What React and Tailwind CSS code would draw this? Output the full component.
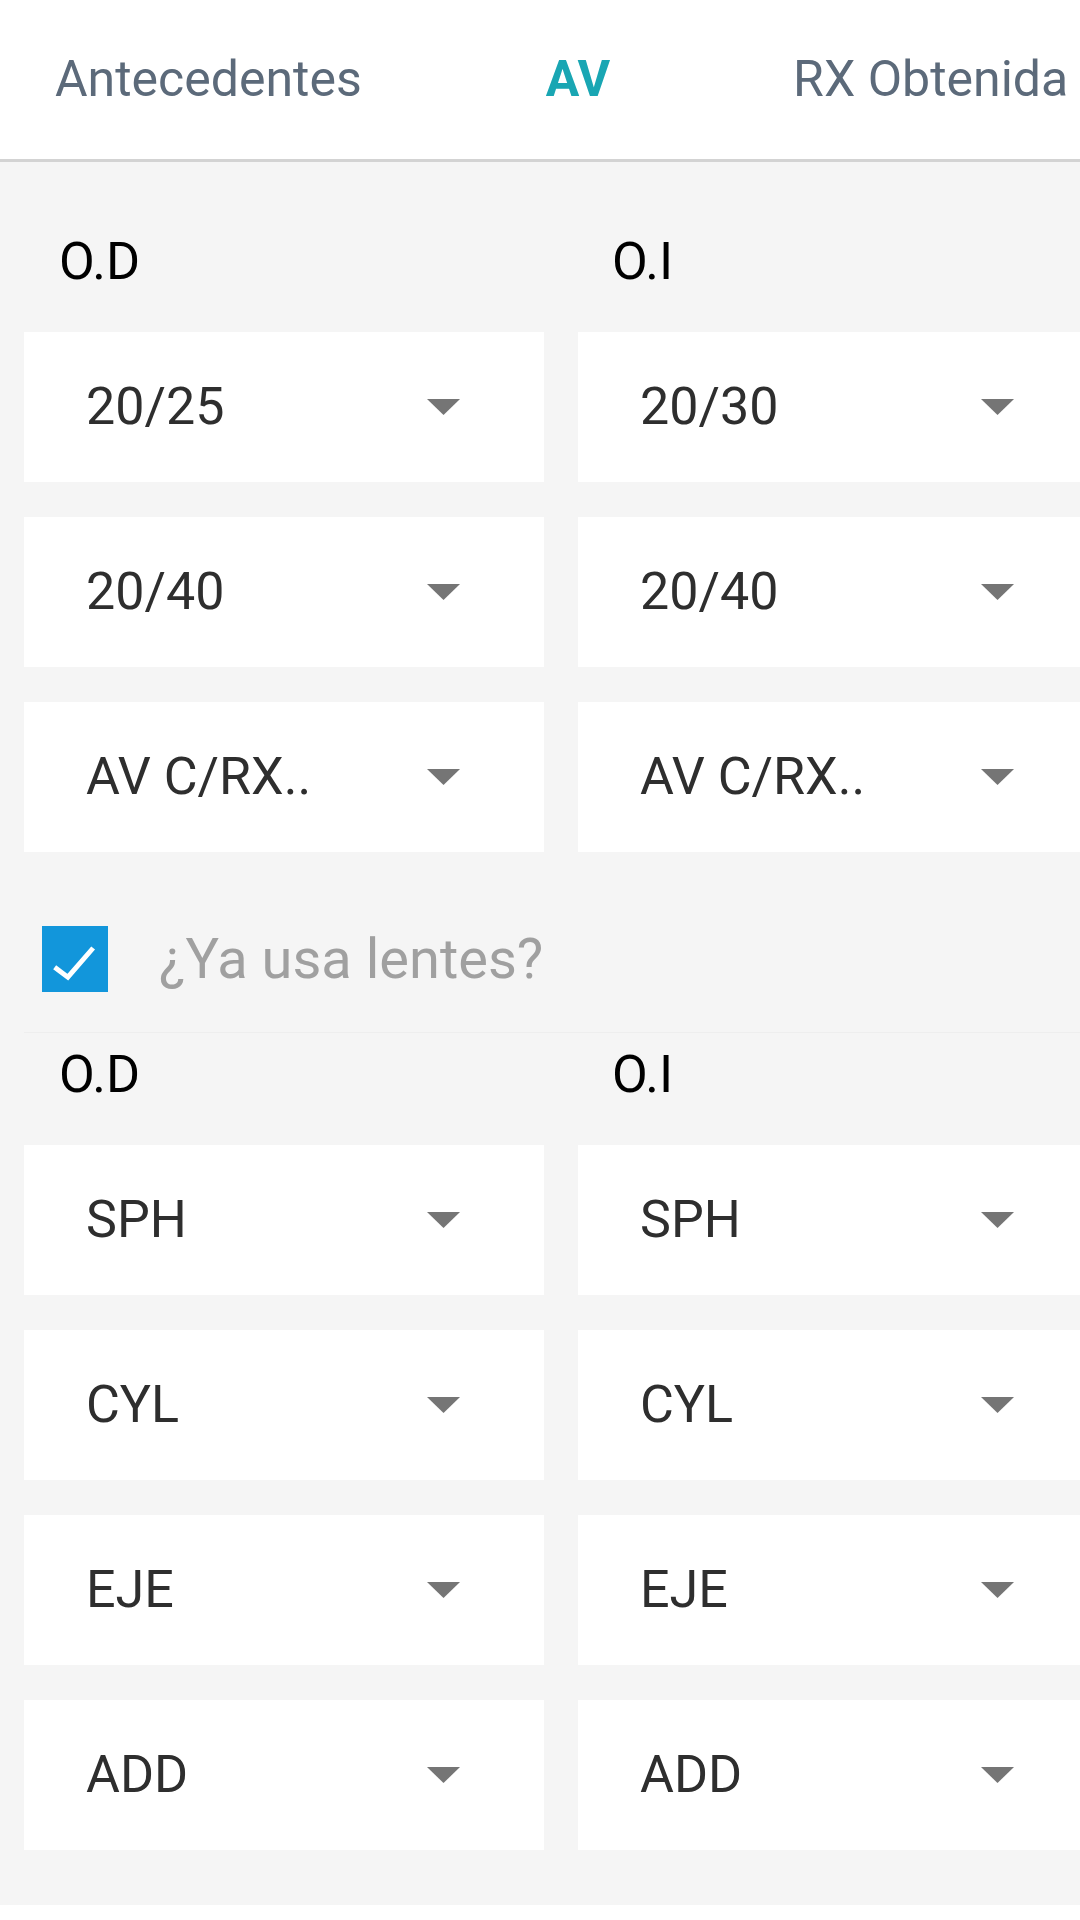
import React from 'react'

const font = { fontFamily: 'Roboto, "Noto Sans", sans-serif' }

const agudeza = [
  ['20/25', '20/30'],
  ['20/40', '20/40'],
  ['AV C/RX..', 'AV C/RX..'],
]

const lentes = [
  ['SPH', 'SPH'],
  ['CYL', 'CYL'],
  ['EJE', 'EJE'],
  ['ADD', 'ADD'],
]

function Arrow() {
  return (
    <svg width="33" height="16" viewBox="0 0 33 16" className="shrink-0">
      <polygon points="0,0 33,0 16.5,16" fill="#757575" />
    </svg>
  )
}

function Select({ value }) {
  return (
    <div className="h-[150px] bg-white flex items-center pl-[62px] pr-[84px] justify-between">
      <span className="text-[52px] text-[#2e2e2e] leading-none">{value}</span>
      <Arrow />
    </div>
  )
}

function EyeSection({ rows }) {
  return (
    <div className="grid grid-cols-[520px_520px] gap-x-[34px]">
      <div className="h-[60px] leading-[60px] pl-[35px] text-[52px] text-black">O.D</div>
      <div className="h-[60px] leading-[60px] pl-[34px] text-[52px] text-black">O.I</div>
      <div className="col-span-2 grid grid-cols-[520px_520px] gap-x-[34px] gap-y-[35px] mt-[40px]">
        {rows.map(([od, oi], i) => (
          <React.Fragment key={i}>
            <Select value={od} />
            <Select value={oi} />
          </React.Fragment>
        ))}
      </div>
    </div>
  )
}

export default function App() {
  return (
    <div className="w-[1080px] h-[1920px] overflow-hidden bg-white" style={font}>
      {/* pestañas */}
      <div className="h-[162px] border-b-[3px] border-[#d3d3d3] bg-white flex items-center pl-[55px] whitespace-nowrap">
        <span className="text-[50px] text-[#5c6a7a]">Antecedentes</span>
        <span className="ml-[184px] text-[50px] font-bold text-[#19a6b3]">AV</span>
        <span className="ml-[183px] text-[50px] text-[#5c6a7a]">RX Obtenida</span>
      </div>

      <div className="h-[1743px] bg-[#f5f5f5] pl-[24px] overflow-hidden">
        {/* agudeza visual */}
        <div className="pt-[70px]">
          <EyeSection rows={agudeza} />
        </div>

        {/* checkbox */}
        <div className="flex items-center pt-[74px] pb-[40px] pl-[18px] border-b border-[#eeeeee]">
          <div className="w-[66px] h-[66px] bg-[#1296db] flex items-center justify-center">
            <svg width="66" height="66" viewBox="0 0 24 24">
              <polyline points="4.6,15 9.4,18.6 18.6,8" fill="none" stroke="white" strokeWidth="1.8" />
            </svg>
          </div>
          <span className="ml-[51px] text-[56px] text-[#a0a0a0] leading-none">¿Ya usa lentes?</span>
        </div>

        {/* lentes actuales */}
        <div className="pt-[12px]">
          <EyeSection rows={lentes} />
        </div>
      </div>
    </div>
  )
}
